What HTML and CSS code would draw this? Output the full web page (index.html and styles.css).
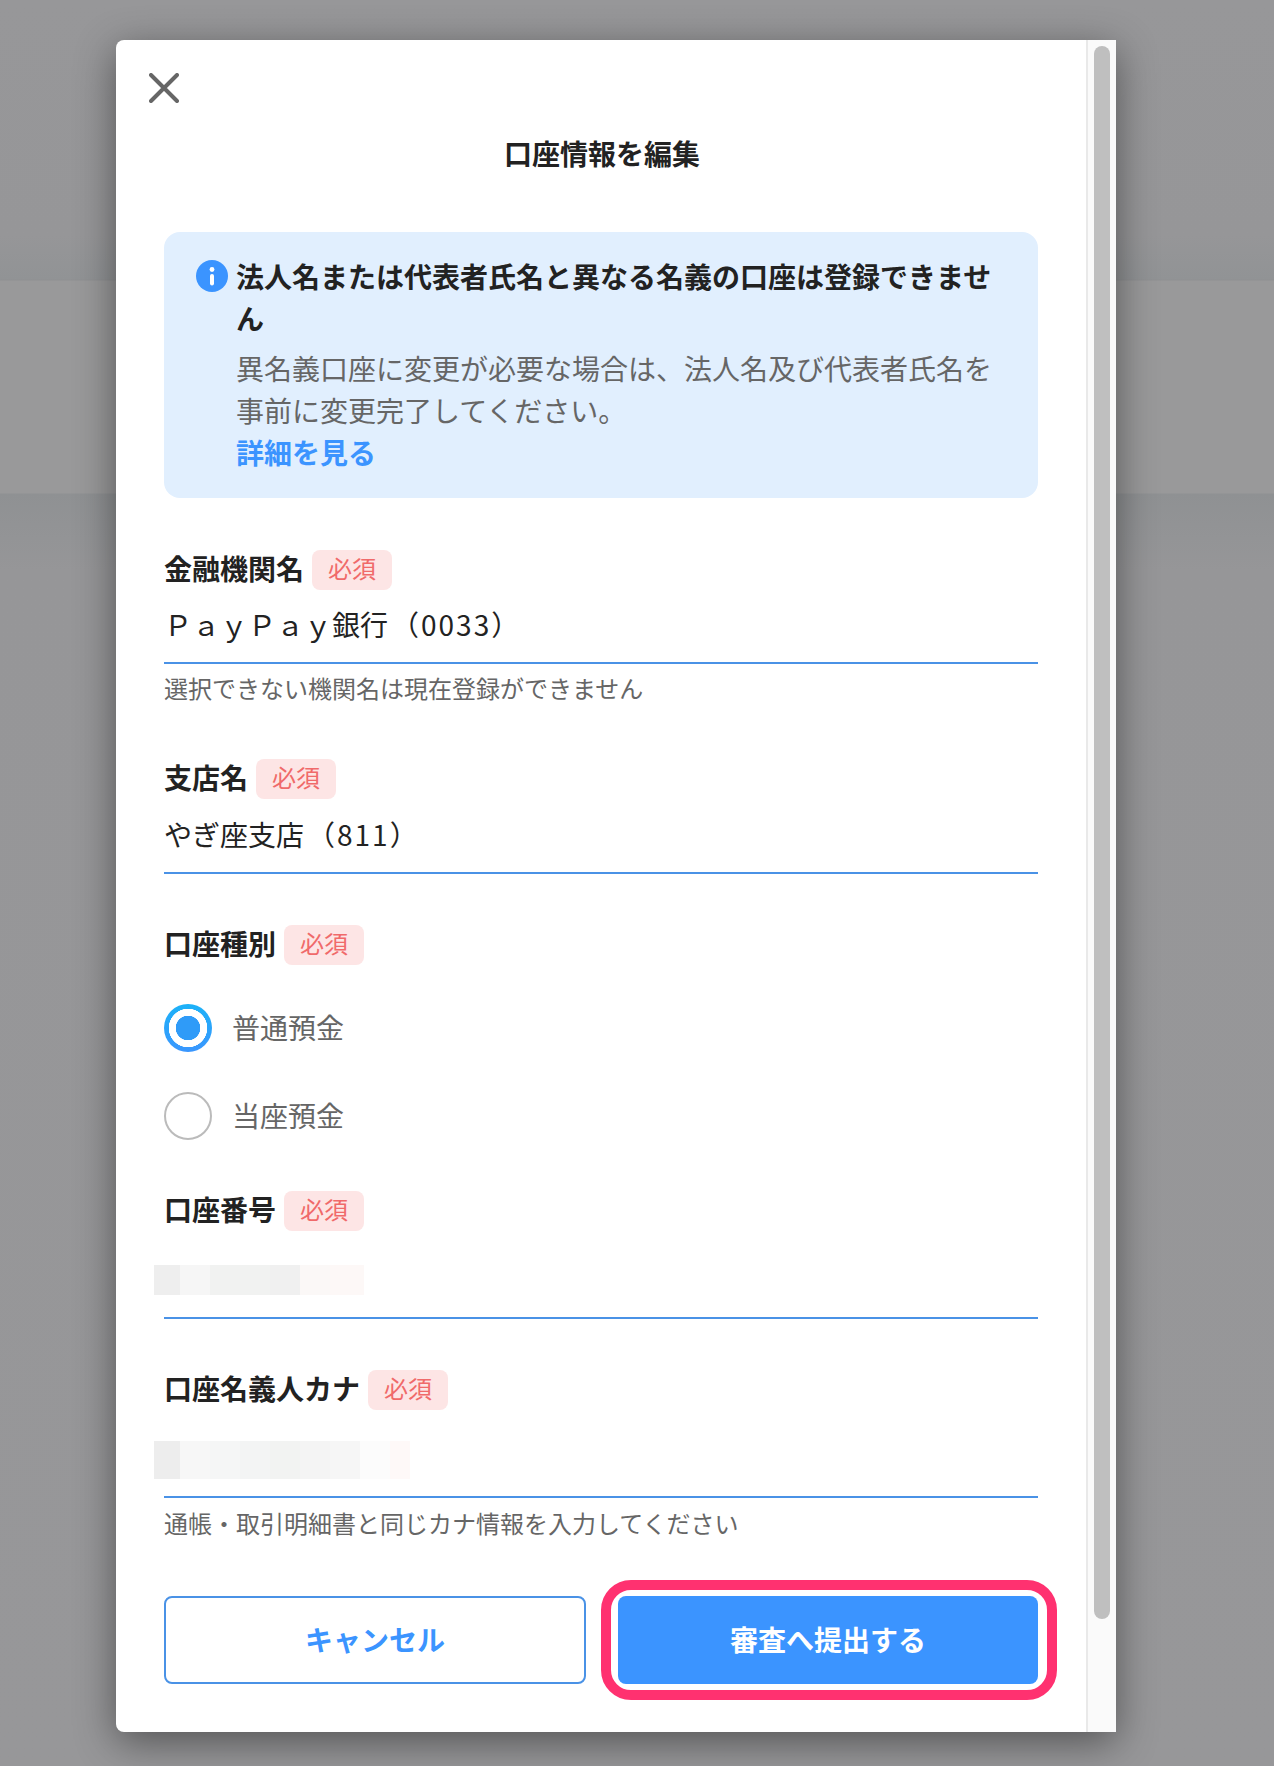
FILE: index.html
```html
<!DOCTYPE html>
<html lang="ja">
<head>
<meta charset="utf-8">
<title>口座情報を編集</title>
<link rel="stylesheet" href="styles.css">
</head>
<body>
<div class="modal">
  <div class="content">
    <button class="close" type="button" aria-label="閉じる">
      <svg viewBox="0 0 30 30" width="30" height="30"><path d="M2 2 28 28M28 2 2 28"/></svg>
    </button>
    <h1 class="title">口座情報を編集</h1>
    <section class="info">
      <svg class="info-icon" viewBox="0 0 32 32" width="32" height="32"><circle class="info-disc" cx="16" cy="16" r="16"/><circle class="info-mark" cx="16" cy="9.5" r="2.4"/><rect class="info-mark" x="14" y="14" width="4" height="11.5" rx="2"/></svg>
      <div class="info-body">
        <p class="info-head">法人名または代表者氏名と異なる名義の口座は登録できません</p>
        <p class="info-text">異名義口座に変更が必要な場合は、法人名及び代表者氏名を事前に変更完了してください。</p>
        <a class="info-link">詳細を見る</a>
      </div>
    </section>

    <div class="field field-first">
      <div class="label-row"><span class="label">金融機関名</span><span class="badge">必須</span></div>
      <div class="input">ＰａｙＰａｙ銀行<span class="code">（0033）</span></div>
      <p class="help">選択できない機関名は現在登録ができません</p>
    </div>

    <div class="field">
      <div class="label-row"><span class="label">支店名</span><span class="badge">必須</span></div>
      <div class="input input-branch">やぎ座支店<span class="code">（811）</span></div>
    </div>

    <div class="field field-tight">
      <div class="label-row"><span class="label">口座種別</span><span class="badge">必須</span></div>
      <div class="radios">
        <div class="radio"><span class="radio-mark radio-on"></span><span class="radio-text">普通預金</span></div>
        <div class="radio"><span class="radio-mark"></span><span class="radio-text">当座預金</span></div>
      </div>
    </div>

    <div class="field field-tight">
      <div class="label-row"><span class="label">口座番号</span><span class="badge">必須</span></div>
      <div class="input input-masked input-masked-a"><div class="mosaic mosaic-a"></div></div>
    </div>

    <div class="field field-tight">
      <div class="label-row"><span class="label">口座名義人カナ</span><span class="badge">必須</span></div>
      <div class="input input-masked input-masked-b"><div class="mosaic mosaic-b"></div></div>
      <p class="help">通帳・取引明細書と同じカナ情報を入力してください</p>
    </div>

    <div class="actions">
      <button class="btn btn-outline" type="button"><span class="btn-text">キャンセル</span></button>
      <div class="submit-wrap">
        <button class="btn btn-primary" type="button"><span class="btn-text">審査へ提出する</span></button>
        <div class="ring"></div>
      </div>
    </div>
  </div>
  <div class="scrollbar"><div class="thumb"></div></div>
</div>
</body>
</html>
```
FILE: styles.css
```css
* { box-sizing: border-box; }
html, body { margin: 0; padding: 0; }
body {
  height: 1766px;
  overflow: hidden;
  padding: 40px 0 0 116px;
  font-family: "Noto Sans CJK JP", "Noto Sans", sans-serif;
  color: #222;
  background: linear-gradient(to bottom, #979799 0, #969698 235px, #919395 279px, #8f9092 280px, #99999a 281px, #99999a 493px, #8f9193 494px, #969698 570px, #979799 100%);
}
p, h1 { margin: 0; }

.modal {
  width: 1000px;
  height: 1692px;
  display: flex;
  background: #fff;
  border-radius: 8px 0 0 8px;
  box-shadow: 0 10px 40px rgba(0, 0, 0, .45);
}
.content {
  flex: 1;
  min-width: 0;
  padding: 33px 48px 0;
}
.close {
  display: block;
  width: 30px;
  height: 30px;
  margin-left: -15px;
  padding: 0;
  border: 0;
  background: none;
}
.close svg { display: block; }
.close path { fill: none; stroke: #666; stroke-width: 4; stroke-linecap: round; }
.title {
  margin-top: 29px;
  padding-left: 2px;
  font-size: 28px;
  line-height: 42px;
  font-weight: 700;
  text-align: center;
}

.info {
  margin-top: 58px;
  padding: 23px 32px 25px;
  display: flex;
  gap: 8px;
  background: #e1effe;
  border-radius: 16px;
}
.info-icon { flex: none; margin-top: 5px; }
.info-disc { fill: #3b94ff; }
.info-mark { fill: #fff; }
.info-body { flex: 1; min-width: 0; font-size: 28px; line-height: 42px; }
.info-head { font-weight: 700; }
.info-text { margin-top: 8px; color: #666; }
.info-link { display: block; color: #3b94ff; font-weight: 700; }

.field { margin-top: 52px; }
.field-tight { margin-top: 51px; }
.label-row { display: flex; align-items: flex-start; gap: 8px; height: 40px; }
.label { font-size: 28px; line-height: 36px; font-weight: 700; }
.badge {
  width: 80px;
  height: 40px;
  font-size: 24px;
  line-height: 36px;
  text-align: center;
  color: #f06a6a;
  background: #fde5e5;
  border-radius: 8px;
}
.input {
  height: 74px;
  padding-top: 13px;
  font-size: 28px;
  line-height: 42px;
  color: #222;
  border-bottom: 2px solid #4a92e6;
}
.input-branch { height: 75px; padding-top: 14px; }
.code { margin-left: 3px; letter-spacing: 2px; }
.input-masked { height: 88px; }
.input-masked-a { padding-top: 34px; }
.input-masked-b { padding-top: 31px; }
.mosaic { margin-left: -10px; }
.mosaic-a {
  width: 210px;
  height: 30px;
  background: linear-gradient(to right, #eeeeee 0 26px, #f6f6f6 26px 56px, #f1f2f1 56px 116px, #f0f0f0 116px 146px, #fbf8f7 146px 176px, #fdf8f7 176px);
}
.mosaic-b {
  width: 256px;
  height: 38px;
  background: linear-gradient(to right, #ededed 0 26px, #f7f7f7 26px 56px, #f5f6f6 56px 86px, #f3f4f4 86px 116px, #f2f3f2 116px 146px, #f4f4f4 146px 176px, #f6f6f6 176px 206px, #fcfcfc 206px 236px, #fef9f8 236px);
}
.help {
  margin-top: 7px;
  font-size: 24px;
  line-height: 36px;
  color: #666;
}
.field-first .help { margin-top: 6px; padding-bottom: 1px; box-sizing: content-box; }

.radios { margin-top: 39px; display: flex; flex-direction: column; gap: 40px; }
.radio { display: flex; align-items: center; gap: 20px; height: 48px; font-size: 28px; line-height: 42px; color: #666; }
.radio-text { margin-bottom: 2px; }
.radio-mark {
  flex: none;
  width: 48px;
  height: 48px;
  border-radius: 50%;
  border: 2px solid #bbb;
  background: #fff;
}
.radio-on {
  border: 0;
  background:
    radial-gradient(circle at center, #2f9bf8 0 12px, #fff 12.5px 19px, transparent 19.5px),
    linear-gradient(to bottom, #1cb2f8, #3a96fe);
}

.actions { margin-top: 55px; display: flex; gap: 32px; }
.btn {
  display: block;
  width: 100%;
  height: 88px;
  padding: 0;
  font-family: inherit;
  font-size: 28px;
  font-weight: 700;
  border-radius: 8px;
}
.btn-text { display: block; margin-bottom: 2px; }
.btn-outline { flex: 0 0 422px; color: #3b94ff; background: #fff; border: 2px solid #4a92e6; }
.btn-primary { color: #fff; background: #3b94ff; border: 0; }
.submit-wrap { flex: 1; min-width: 0; position: relative; }
.ring {
  position: absolute;
  inset: -16px -19px -16px -17px;
  border: 10px solid #ff3170;
  border-radius: 30px;
  pointer-events: none;
}

.scrollbar {
  flex: none;
  width: 30px;
  padding: 6px 0 0 6px;
  background: #fafafa;
  border-left: 2px solid #e9e9e9;
}
.thumb {
  width: 16px;
  height: 1573px;
  background: #bfbfbf;
  border-radius: 8px;
}
```
